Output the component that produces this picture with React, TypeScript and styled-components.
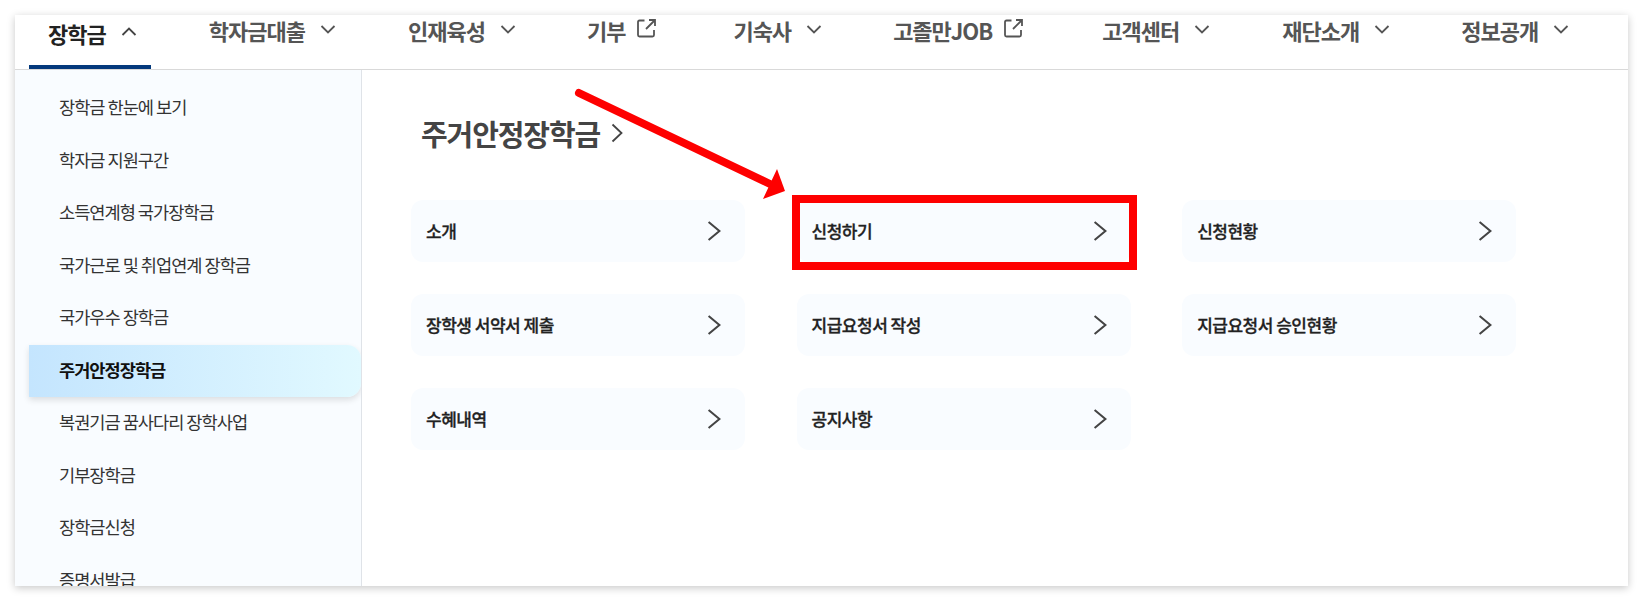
import React from "react";
import styled, { createGlobalStyle } from "styled-components";

const Global = createGlobalStyle`
  html, body { margin: 0; padding: 0; background: #fff; }
  body { font-family: "Noto Sans CJK KR", "Noto Sans", sans-serif; width: 1644px; height: 601px; overflow: hidden; }
`;
const Stage = styled.div`
  position: relative;
  width: 1644px;
  height: 601px;
  padding: 15px 16px 15px 15px;
  box-sizing: border-box;
`;
const Panel = styled.div`
  height: 571px;
  background: #fff;
  box-shadow: 0 2px 8px rgba(0, 0, 0, 0.22);
  display: flex;
  flex-direction: column;
  overflow: hidden;
`;
const Nav = styled.nav`
  height: 54px;
  flex: none;
  display: flex;
  border-bottom: 1px solid #d9d9d9;
  padding-left: 14px;
  box-sizing: content-box;
`;
const Tab = styled.a<{ $active?: boolean; $gap: number }>`
  display: flex;
  align-items: flex-start;
  gap: 14px;
  height: 54px;
  box-sizing: border-box;
  margin-right: ${(p) => p.$gap}px;
  padding: ${(p) => (p.$active ? "3px 13px 0 19px" : "0")};
  font-size: 22px;
  line-height: 30px;
  letter-spacing: -1px;
  white-space: nowrap;
  color: ${(p) => (p.$active ? "#222" : "#555")};
  border-bottom: ${(p) => (p.$active ? "4px solid #03397c" : "none")};
  font-weight: 700;
  svg { flex: none; margin-top: 5px; }
`;
const Body = styled.div`
  flex: 1;
  display: flex;
  min-height: 0;
`;
const Side = styled.aside`
  width: 347px;
  flex: none;
  box-sizing: border-box;
  background: #f9fcff;
  border-right: 1px solid #dfe3e8;
  padding: 12px 0 0 14px;
  overflow: hidden;
`;
const SideItem = styled.a<{ $active?: boolean }>`
  display: block;
  height: 52.5px;
  line-height: 50px;
  padding-left: 30px;
  font-size: 17.6px;
  letter-spacing: -1px;
  white-space: nowrap;
  color: ${(p) => (p.$active ? "#111" : "#333")};
  font-weight: ${(p) => (p.$active ? 700 : 400)};
  ${(p) =>
    p.$active
      ? `background: linear-gradient(90deg, #c4e5fe 0%, #e1f9ff 100%);
         border-radius: 0 14px 14px 0;
         box-shadow: 0 3px 6px rgba(0,0,0,0.12);`
      : ""}
`;
const Main = styled.main`
  flex: 1;
  padding: 42px 0 0 49px;
  box-sizing: border-box;
`;
const Title = styled.h2`
  margin: 0 0 46px 10px;
  height: 42px;
  display: flex;
  align-items: center;
  gap: 11px;
  font-size: 29px;
  line-height: 42px;
  font-weight: 700;
  letter-spacing: -1.1px;
  color: #444;
`;
const Grid = styled.div`
  display: grid;
  grid-template-columns: repeat(3, 334px);
  grid-auto-rows: 62px;
  column-gap: 51.6px;
  row-gap: 32px;
`;
const Card = styled.a<{ $marked?: boolean }>`
  position: relative;
  display: flex;
  align-items: center;
  justify-content: space-between;
  padding: 0 22px 2px 15px;
  background: #f9fcff;
  border-radius: 12px;
  font-size: 17px;
  font-weight: 500;
  letter-spacing: -0.5px;
  -webkit-text-stroke: 0.3px #222;
  color: #222;
  svg { margin-top: 2px; }
  ${(p) =>
    p.$marked
      ? `&::after { content: ""; position: absolute; left: -5px; top: -5px; right: -6px; bottom: -8px; border: 8px solid #fe0000; }`
      : ""}
`;
const Arrow = styled.svg`
  position: absolute;
  left: 570px;
  top: 85px;
  pointer-events: none;
`;

const Chevron = ({ up }: { up?: boolean }) => (
  <svg width="18" height="18" viewBox="0 0 18 18" fill="none" stroke={up ? "#444" : "#555"} strokeWidth="1.8">
    <path d={up ? "M2.5 12 L9 5.5 L15.5 12" : "M2.5 6 L9 12.5 L15.5 6"} />
  </svg>
);
const ExternalIcon = styled.svg`
  && { margin: 3px 0 0 -3px; }
`;
const External = () => (
  <ExternalIcon width="21" height="21" viewBox="0 0 21 21" fill="none" stroke="#555" strokeWidth="1.8">
    <path d="M8.5 2.5 H3.5 Q2 2.5 2 4 V17 Q2 18.5 3.5 18.5 H16.5 Q18 18.5 18 17 V12" />
    <path d="M10 11 L18.5 2.5 M13 2 H19 V8" />
  </ExternalIcon>
);
const Right = () => (
  <svg width="18" height="22" viewBox="0 0 15 18" fill="none" stroke="#444" strokeWidth="1.7">
    <path d="M3 1.5 L12 9 L3 16.5" />
  </svg>
);
const TitleChevron = () => (
  <svg width="12" height="20" viewBox="0 0 12 20" fill="none" stroke="#444" strokeWidth="1.8">
    <path d="M1.5 1.5 L10.5 10 L1.5 18.5" />
  </svg>
);

const tabs: { label: string; kind: "up" | "down" | "ext"; gap: number; active?: boolean }[] = [
  { label: "장학금", kind: "up", gap: 58, active: true },
  { label: "학자금대출", kind: "down", gap: 71 },
  { label: "인재육성", kind: "down", gap: 70 },
  { label: "기부", kind: "ext", gap: 76 },
  { label: "기숙사", kind: "down", gap: 70 },
  { label: "고졸만JOB", kind: "ext", gap: 78 },
  { label: "고객센터", kind: "down", gap: 71 },
  { label: "재단소개", kind: "down", gap: 70 },
  { label: "정보공개", kind: "down", gap: 0 },
];
const side = ["장학금 한눈에 보기", "학자금 지원구간", "소득연계형 국가장학금", "국가근로 및 취업연계 장학금", "국가우수 장학금", "주거안정장학금", "복권기금 꿈사다리 장학사업", "기부장학금", "장학금신청", "증명서발급"];
const cards = ["소개", "신청하기", "신청현황", "장학생 서약서 제출", "지급요청서 작성", "지급요청서 승인현황", "수혜내역", "공지사항"];

export default function App() {
  return (
    <Stage>
      <Global />
      <Panel>
        <Nav>
          {tabs.map((t) => (
            <Tab key={t.label} $active={t.active} $gap={t.gap}>
              {t.label}
              {t.kind === "ext" ? <External /> : <Chevron up={t.kind === "up"} />}
            </Tab>
          ))}
        </Nav>
        <Body>
          <Side>
            {side.map((s) => (
              <SideItem key={s} $active={s === "주거안정장학금"}>{s}</SideItem>
            ))}
          </Side>
          <Main>
            <Title>주거안정장학금 <TitleChevron /></Title>
            <Grid>
              {cards.map((c) => (
                <Card key={c} $marked={c === "신청하기"}>
                  {c}
                  <Right />
                </Card>
              ))}
            </Grid>
          </Main>
        </Body>
      </Panel>
      <Arrow width="225" height="120" viewBox="0 0 225 120">
        <path d="M9 8 L200 99" stroke="#fe0000" strokeWidth="8" strokeLinecap="round" fill="none" />
        <path d="M207 84 L193 114 L215 106 Z" fill="#fe0000" />
      </Arrow>
    </Stage>
  );
}
